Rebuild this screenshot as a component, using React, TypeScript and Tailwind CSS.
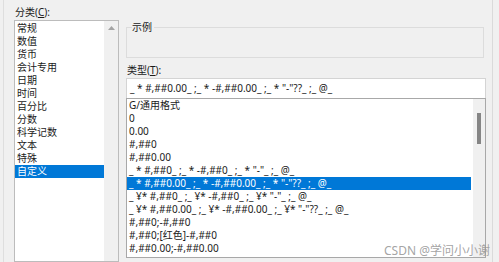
import React from "react";

const CATEGORIES = [
  "常规",
  "数值",
  "货币",
  "会计专用",
  "日期",
  "时间",
  "百分比",
  "分数",
  "科学记数",
  "文本",
  "特殊",
  "自定义",
];

const FORMATS = [
  "G/通用格式",
  "0",
  "0.00",
  "#,##0",
  "#,##0.00",
  '_ * #,##0_ ;_ * -#,##0_ ;_ * "-"_ ;_ @_',
  '_ * #,##0.00_ ;_ * -#,##0.00_ ;_ * "-"??_ ;_ @_',
  '_ ¥* #,##0_ ;_ ¥* -#,##0_ ;_ ¥* "-"_ ;_ @_',
  '_ ¥* #,##0.00_ ;_ ¥* -#,##0.00_ ;_ ¥* "-"??_ ;_ @_',
  "#,##0;-#,##0",
  "#,##0;[红色]-#,##0",
  "#,##0.00;-#,##0.00",
];

const FONT = {
  fontFamily: '"Noto Sans", "Noto Sans CJK SC", sans-serif',
};

export default function App() {
  return (
    <div
      className="relative flex h-[262px] w-[499px] overflow-hidden bg-[#f0f0f0] text-[10px] text-[#1a1a1a]"
      style={FONT}
    >
      {/* dialog edge */}
      <div className="ml-[3px] h-full w-px bg-[#dedede]" />

      {/* category column */}
      <div className="ml-[10px] flex flex-col pt-[4px]">
        <div className="h-[16px] pl-[1px] leading-[16px]">
          分类(<span className="underline">C</span>):
        </div>
        <div className="flex h-[260px] w-[105px] border border-[#bcbcbc] bg-white">
          <div className="flex-1 pt-[0.5px]">
            {CATEGORIES.map((item) => (
              <div
                key={item}
                className={
                  item === "自定义"
                    ? "h-[13px] bg-[#0078d7] pl-[2px] leading-[13px] text-white"
                    : "h-[13px] pl-[2px] leading-[13px]"
                }
              >
                {item}
              </div>
            ))}
          </div>
          <div className="flex w-[14px] justify-center bg-[#f0f0f0] pt-[5px]">
            <svg width="7" height="4" viewBox="0 0 7 4">
              <path d="M0 4 L3.5 0 L7 4 Z" fill="#a3a3a3" />
            </svg>
          </div>
        </div>
      </div>

      {/* type column */}
      <div className="ml-[7px] flex w-[360px] flex-col">
        <div className="relative mt-[27px] h-[31px] w-[358px] border border-[#dcdcdc]">
          <span className="absolute -top-[8px] left-[5px] bg-[#f0f0f0] pr-[2px] leading-[14px]">
            示例
          </span>
        </div>
        <div className="mt-[4px] h-[16px] pl-[1px] leading-[16px]">
          类型(<span className="underline">T</span>):
        </div>
        <div className="h-[20px] border border-b-0 border-[#d4d4d4] bg-white pl-[3px] leading-[19px] whitespace-pre">
          {'_ * #,##0.00_ ;_ * -#,##0.00_ ;_ * "-"??_ ;_ @_'}
        </div>
        <div className="flex h-[160px] border border-[#a8a8a8] bg-white">
          <div className="flex-1 pr-[2px]">
            {FORMATS.map((fmt, i) => (
              <div
                key={fmt}
                className={
                  i === 6
                    ? "h-[13px] bg-[#0078d7] pl-[2px] leading-[13px] whitespace-pre text-white"
                    : "h-[13px] pl-[2px] leading-[13px] whitespace-pre"
                }
              >
                {fmt}
              </div>
            ))}
          </div>
          <div className="flex w-[12px] justify-center bg-[#f0f0f0] pt-[14px]">
            <div className="h-[31px] w-[4px] bg-[#858585]" />
          </div>
        </div>
      </div>

      {/* right dialog edge */}
      <div className="ml-[6px] h-full w-px bg-[#dadada]" />

      {/* watermark */}
      <div className="absolute right-[9px] bottom-[5px] text-[12px] leading-[13px] text-[#8c8c8c]/80">
        CSDN @学问小小谢
      </div>
    </div>
  );
}
